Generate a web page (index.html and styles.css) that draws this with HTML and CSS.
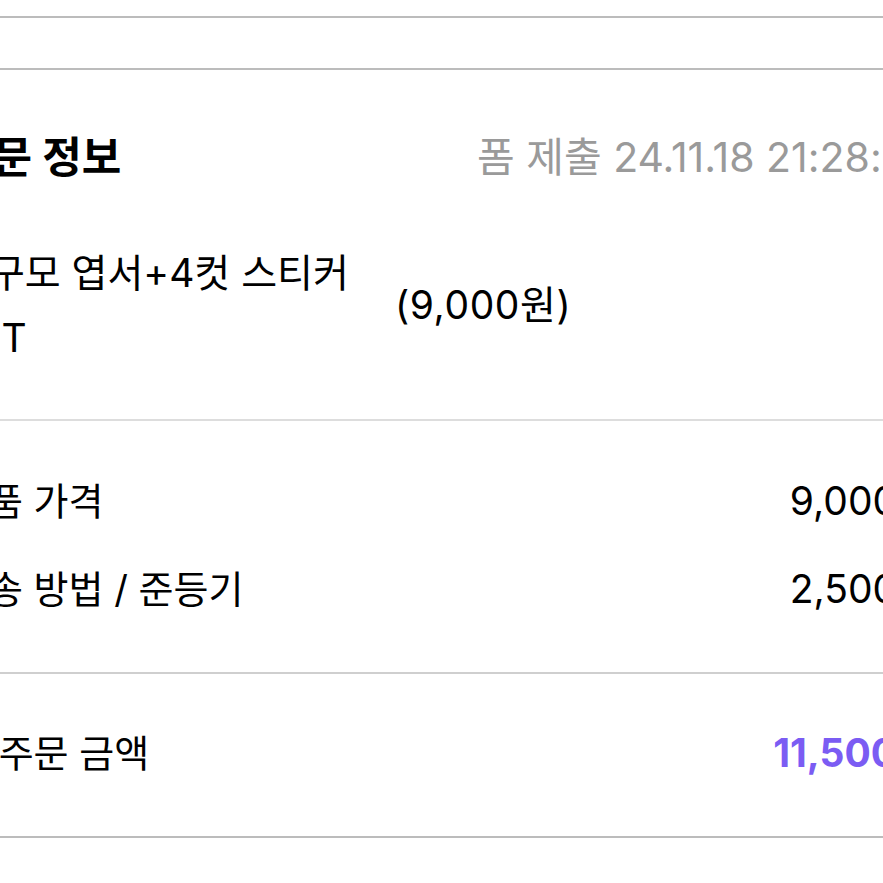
FILE: index.html
```html
<!DOCTYPE html>
<html lang="ko">
<head>
<meta charset="utf-8">
<link rel="stylesheet" href="styles.css">
</head>
<body>
<div class="page">
  <div class="gap-top"></div>
  <div class="rule"></div>
  <div class="gap-blank"></div>
  <div class="rule"></div>
  <section class="card">
    <header class="card-head">
      <h2 class="title">주문 정보</h2>
      <span class="stamp">폼 제출 24.11.18 21:28:35</span>
    </header>
    <div class="item">
      <div class="item-name">미구모 엽서+4컷 스티커<br>SET</div>
      <div class="item-price">(9,000원)</div>
    </div>
  </section>
  <div class="rule light"></div>
  <section class="rows">
    <div class="row"><span>상품 가격</span><span class="val">9,000원</span></div>
    <div class="row"><span>배송 방법 / 준등기</span><span class="val">2,500원</span></div>
  </section>
  <div class="rule mid"></div>
  <section class="total">
    <div class="row"><span>총 주문 금액</span><span class="val strong">11,500원</span></div>
  </section>
  <div class="rule"></div>
</div>
</body>
</html>
```
FILE: styles.css
```css
html, body {
  margin: 0;
  padding: 0;
  background: #ffffff;
  overflow: hidden;
}
body {
  font-family: Inter, "Noto Sans CJK KR", sans-serif;
  color: #000;
  width: 883px;
  height: 883px;
}
.page {
  margin-left: -47px;
  width: 980px;
}
.gap-top { height: 16px; }
.gap-blank { height: 50px; }
.rule {
  height: 2px;
  background: #bcbcbc;
}
.rule.light { background: #dddddd; }
.rule.mid { background: #cfcfcf; }

.card-head {
  display: flex;
  justify-content: space-between;
  align-items: center;
  padding-top: 63px;
  height: 48px;
}
.title {
  margin: 0;
  font-size: 43px;
  font-weight: 700;
  line-height: 48px;
}
.stamp {
  font-size: 41px;
  line-height: 48px;
  color: #9a9a9a;
  margin-right: 1px;
  white-space: nowrap;
}
.item {
  display: flex;
  align-items: center;
  padding-top: 59px;
  padding-bottom: 49px;
  font-size: 39px;
}
.item-name {
  width: 442px;
  line-height: 65px;
  flex: none;
}
.item-price {
  line-height: 44px;
  flex: none;
  letter-spacing: 0.6px;
}
.rows {
  display: flex;
  flex-direction: column;
  gap: 44px;
  padding-top: 58px;
  padding-bottom: 61px;
}
.row {
  display: flex;
  justify-content: space-between;
  font-size: 38px;
  line-height: 44px;
}
.total {
  padding-top: 57px;
  padding-bottom: 61px;
}
.val {
  font-size: 39px;
}
.val.strong {
  color: #7b5cf3;
  font-weight: 700;
}
```
